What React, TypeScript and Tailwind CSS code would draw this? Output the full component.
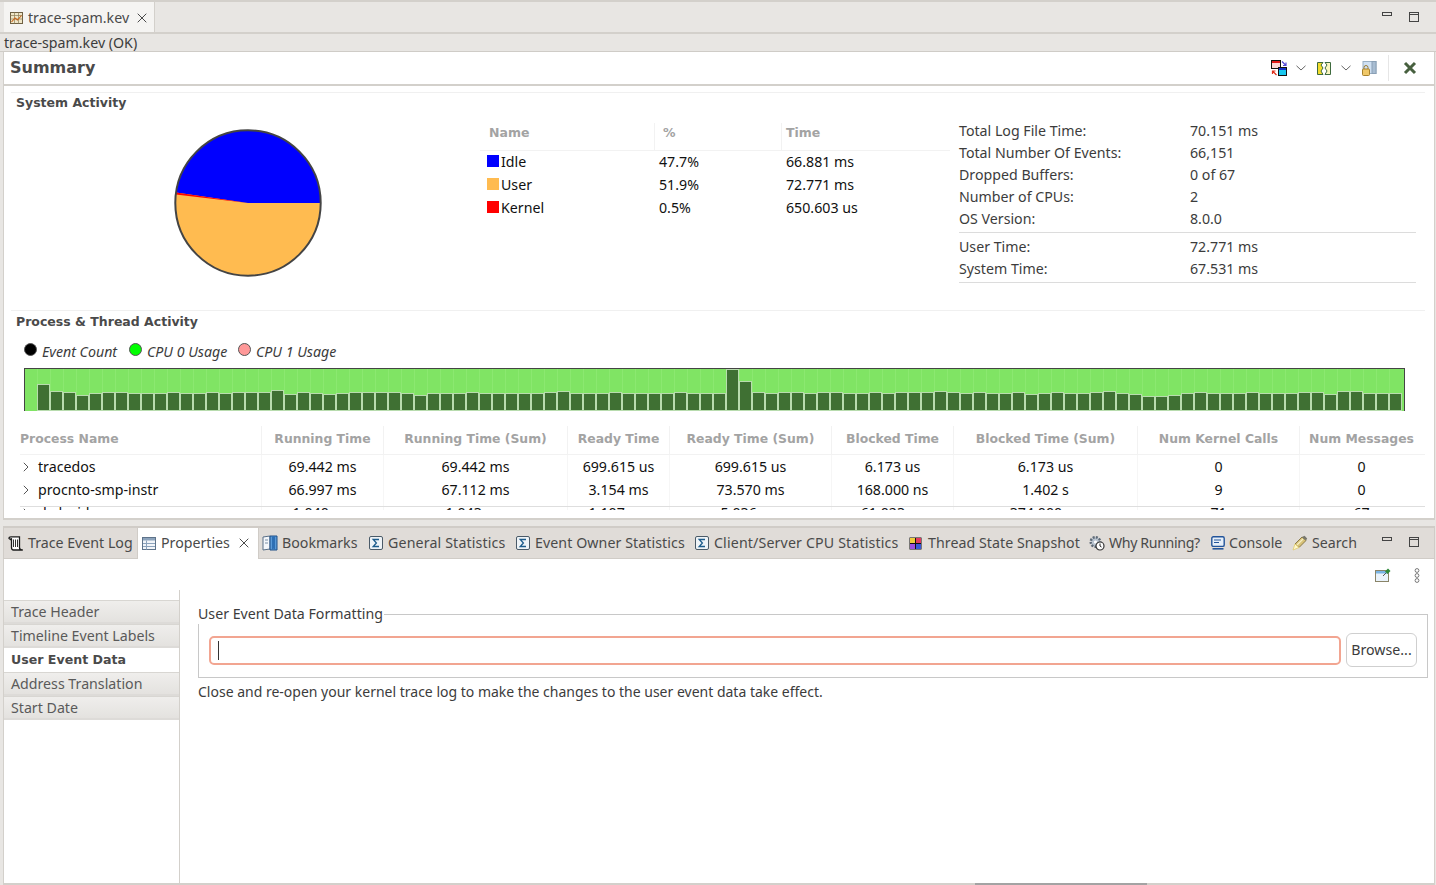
import React from "react";

const barHeights = [27,20,19,16,18,19,19,18,18,18,19,18,18,19,18,19,19,19,21,17,19,18,17,18,19,19,19,19,18,16,18,18,18,19,18,18,18,18,18,19,20,18,18,18,19,18,18,18,18,19,18,18,18,42,30,19,18,19,19,18,19,19,18,18,19,18,19,19,19,20,19,18,19,18,18,19,17,18,19,18,18,19,20,18,17,15,15,16,18,19,18,18,18,19,18,18,18,19,19,17,20,20,18,18,18];

function Sigma() {
  return (
    <svg width="14" height="14" viewBox="0 0 14 14" className="shrink-0">
      <rect x="0.5" y="0.5" width="13" height="13" rx="1.5" fill="#eef3f7" stroke="#4a5a68" />
      <path d="M10 3.5H4.2L7.4 7 4.2 10.5H10" fill="none" stroke="#1d5c8c" strokeWidth="1.3" />
    </svg>
  );
}
function CloseX({ size = 10 }: { size?: number }) {
  return (
    <svg width={size} height={size} viewBox="0 0 10 10" className="shrink-0">
      <path d="M0.7 0.7L9.3 9.3M9.3 0.7L0.7 9.3" stroke="#4a4a4a" strokeWidth="1" fill="none" />
    </svg>
  );
}
function Chevron() {
  return (
    <svg width="10" height="6" viewBox="0 0 10 6" className="shrink-0">
      <path d="M0.5 0.8L5 5L9.5 0.8" fill="none" stroke="#666" strokeWidth="1" />
    </svg>
  );
}
function KevIcon() {
  return (
    <svg width="13" height="12" viewBox="0 0 13 12" className="shrink-0">
      <rect x="0.5" y="0.5" width="12" height="11" fill="#efe6c8" stroke="#6f6144" />
      <path d="M0.5 3.5H12.5M0.5 7H12.5M4.5 0.5V11.5M8.5 0.5V11.5" stroke="#8d7c58" strokeWidth="0.7" />
      <path d="M1.5 10L5 6L7.5 8L11.5 3.5" fill="none" stroke="#c8651c" strokeWidth="1.1" />
    </svg>
  );
}
function SwapIcon() {
  return (
    <svg width="16" height="16" viewBox="0 0 16 16" className="shrink-0">
      <rect x="0.5" y="0.5" width="9" height="8" fill="#fbd5d5" stroke="#111" />
      <rect x="1" y="1" width="8" height="2" fill="#e01818" />
      <rect x="7.5" y="7.5" width="8" height="8" fill="#19c7ee" stroke="#111" />
      <rect x="8" y="8" width="7" height="2" fill="#1232c8" />
      <path d="M11 1.5L15 5.5M15 2.5V5.5H12" fill="none" stroke="#5548d8" strokeWidth="1.2" />
      <path d="M5.5 15L1.5 11M1.5 14V11H4.5" fill="none" stroke="#e0301c" strokeWidth="1.2" />
    </svg>
  );
}
function SplitIcon() {
  return (
    <svg width="14" height="13" viewBox="0 0 14 13" className="shrink-0">
      <path d="M0.5 0.5H6L4 3L6 6L4 9L6 12.5H0.5Z" fill="#f2dc2c" stroke="#3e6a3e" />
      <path d="M13.5 0.5H8L10 3L8 6L10 9L8 12.5H13.5Z" fill="#fbf6c0" stroke="#3e6a3e" />
    </svg>
  );
}
function LockIcon() {
  return (
    <svg width="15" height="15" viewBox="0 0 15 15" className="shrink-0">
      <rect x="1" y="0.5" width="13" height="12" fill="#cfe0f2" stroke="#9ab0c4" />
      <rect x="10" y="0.5" width="4" height="12" fill="#a8bdd2" stroke="#8aa0b6" />
      <rect x="0.5" y="8" width="7" height="6.5" rx="1" fill="#f0c868" stroke="#a8822c" />
      <path d="M2 8V6.5a2 2 0 0 1 4 0V8" fill="none" stroke="#9a7a30" />
    </svg>
  );
}
function LogIcon() {
  return (
    <svg width="16" height="15" viewBox="0 0 16 15" className="shrink-0">
      <path d="M1 2.5C1 1 2 0.8 3 0.8H11.5V11.5C11.5 13 12.5 14 14.8 14H5.5C4 14 3.5 13 3.5 11.5V3C3.5 2.5 3 2.5 2.5 3.5L1 2.5Z" fill="#fff" stroke="#1c1c1c" strokeWidth="1.3" />
      <path d="M5.5 3.5V11M7.5 3.5V11M9.5 3.5V11" stroke="#1c1c1c" strokeWidth="0.9" />
    </svg>
  );
}
function PropsIcon() {
  return (
    <svg width="14" height="13" viewBox="0 0 14 13" className="shrink-0">
      <rect x="0.5" y="0.5" width="13" height="12" fill="#f2f5f9" stroke="#5e738a" />
      <rect x="1" y="1" width="12" height="2.5" fill="#8ca3bc" />
      <path d="M4.5 3.5V12.5M1 6.5H13M1 9.5H13" stroke="#8ca3bc" />
    </svg>
  );
}
function BookIcon() {
  return (
    <svg width="16" height="16" viewBox="0 0 16 16" className="shrink-0">
      <path d="M1 2L8 1V14L1 15Z" fill="#f4f7fb" stroke="#5a7088" />
      <path d="M8 1H15V15H8Z" fill="#5a9ad8" stroke="#1f4f86" />
      <path d="M10 1V15L11.5 13.5L13 15V1Z" fill="#2e6fb4" />
      <path d="M3 5H6M3 8H6" stroke="#7a8fa6" />
    </svg>
  );
}
function ThreadIcon() {
  return (
    <svg width="13" height="13" viewBox="0 0 13 13" className="shrink-0">
      <rect x="0.5" y="0.5" width="12" height="12" fill="#111" />
      <rect x="1" y="1" width="5" height="5" fill="#f0cc3c" />
      <rect x="7" y="1" width="5" height="5" fill="#e23a5e" />
      <rect x="1" y="7" width="5" height="5" fill="#9c4fe0" />
      <rect x="7" y="7" width="5" height="5" fill="#3a58d8" />
    </svg>
  );
}
function GearIcon() {
  return (
    <svg width="16" height="16" viewBox="0 0 16 16" className="shrink-0">
      <circle cx="6.5" cy="7" r="4.8" fill="#b9c4d0" stroke="#5f6b78" strokeWidth="2.4" strokeDasharray="2 1.2" />
      <circle cx="6.5" cy="7" r="1.6" fill="#fff" />
      <circle cx="11" cy="11" r="4" fill="#fff" stroke="#333" strokeWidth="1.2" />
      <path d="M11 8.5V11L12.5 12" fill="none" stroke="#222" />
    </svg>
  );
}
function ConsoleIcon() {
  return (
    <svg width="14" height="14" viewBox="0 0 14 14" className="shrink-0">
      <rect x="0.8" y="0.8" width="12.4" height="9.6" rx="1.5" fill="#e6eff9" stroke="#22549a" strokeWidth="1.4" />
      <path d="M3 4H10M3 6.5H8" stroke="#22549a" />
      <path d="M1.5 12.8H12.5" stroke="#22549a" strokeWidth="1.6" />
    </svg>
  );
}
function SearchIcon() {
  return (
    <svg width="16" height="16" viewBox="0 0 16 16" className="shrink-0">
      <path d="M3 9L10 2L14 5.5L7 12.5Z" fill="#d8c278" stroke="#8a7a48" />
      <path d="M1 15L3 9L7 12.5Z" fill="#fff8cc" stroke="#e0c860" strokeWidth="0.7" />
      <path d="M10 2L14 5.5L15.2 3.5L12.5 0.8Z" fill="#77776e" />
      <path d="M5 10L11 4" stroke="#f6eec4" strokeWidth="1.2" />
    </svg>
  );
}
function PinIcon() {
  return (
    <svg width="16" height="14" viewBox="0 0 16 14" className="shrink-0">
      <rect x="0.5" y="2.5" width="13" height="11" fill="#eaf3fb" stroke="#8a8468" />
      <rect x="1" y="3" width="12" height="2.5" fill="#79b4e4" />
      <path d="M8 8L11 5" stroke="#555" />
      <path d="M10 3.5L13 0.5L15.5 3L12.5 6Z" fill="#2e8a38" />
    </svg>
  );
}
function MenuDots() {
  return (
    <svg width="6" height="15" viewBox="0 0 6 15" className="shrink-0">
      <circle cx="3" cy="2.5" r="1.9" fill="#fff" stroke="#777" />
      <circle cx="3" cy="7.5" r="1.9" fill="#fff" stroke="#777" />
      <circle cx="3" cy="12.5" r="1.9" fill="#fff" stroke="#777" />
    </svg>
  );
}
function Expander() {
  return (
    <svg width="6" height="10" viewBox="0 0 6 10" className="shrink-0">
      <path d="M0.8 0.8L5 5L0.8 9.2" fill="none" stroke="#555" />
    </svg>
  );
}
function MinIcon() {
  return (
    <svg width="10" height="5" viewBox="0 0 10 5" className="mb-[5px] shrink-0">
      <rect x="0.5" y="0.5" width="9" height="3" fill="none" stroke="#444" />
    </svg>
  );
}
function MaxIcon() {
  return (
    <svg width="10" height="10" viewBox="0 0 10 10" className="ml-[17px] shrink-0">
      <rect x="0.5" y="0.5" width="9" height="9" fill="none" stroke="#444" />
      <path d="M0.5 2.5H9.5" stroke="#444" />
    </svg>
  );
}

const info1 = [
  ["Total Log File Time:", "70.151 ms"],
  ["Total Number Of Events:", "66,151"],
  ["Dropped Buffers:", "0 of 67"],
  ["Number of CPUs:", "2"],
  ["OS Version:", "8.0.0"],
];
const info2 = [
  ["User Time:", "72.771 ms"],
  ["System Time:", "67.531 ms"],
];
const legendRows = [
  ["Idle", "bg-[#0000ff]", "47.7%", "66.881 ms"],
  ["User", "bg-[#ffbb50]", "51.9%", "72.771 ms"],
  ["Kernel", "bg-[#ff0000]", "0.5%", "650.603 us"],
];
const gridCols = "grid grid-cols-[241px_122px_184px_102px_162px_122px_184px_162px_124px]";
const procHeaders = ["Running Time", "Running Time (Sum)", "Ready Time", "Ready Time (Sum)", "Blocked Time", "Blocked Time (Sum)", "Num Kernel Calls", "Num Messages"];
const procRows = [
  ["tracedos", "69.442 ms", "69.442 ms", "699.615 us", "699.615 us", "6.173 us", "6.173 us", "0", "0"],
  ["procnto-smp-instr", "66.997 ms", "67.112 ms", "3.154 ms", "73.570 ms", "168.000 ns", "1.402 s", "9", "0"],
  ["dsdevid", "1.040 ms", "1.043 ms", "1.107 ms", "5.036 ms", "61.023 us", "374.000 us", "71", "67"],
];
const tabs = [
  { label: "Bookmarks", icon: <BookIcon />, cls: "w-[106px] pl-[3px] gap-[4px]" },
  { label: "General Statistics", icon: <Sigma />, cls: "w-[147px] pl-[4px] gap-[5px] tracking-[0.15px]" },
  { label: "Event Owner Statistics", icon: <Sigma />, cls: "w-[179px] pl-[4px] gap-[5px] tracking-[0.08px]" },
  { label: "Client/Server CPU Statistics", icon: <Sigma />, cls: "w-[214px] pl-[4px] gap-[5px] tracking-[0.15px]" },
  { label: "Thread State Snapshot", icon: <ThreadIcon />, cls: "w-[180px] pl-[4px] gap-[6px] tracking-[0.05px]" },
  { label: "Why Running?", icon: <GearIcon />, cls: "w-[121px] pl-[4px] gap-[4px] tracking-[-0.38px]" },
  { label: "Console", icon: <ConsoleIcon />, cls: "w-[82px] pl-[5px] gap-[4px]" },
  { label: "Search", icon: <SearchIcon />, cls: "w-[80px] pl-[4px] gap-[4px]" },
];
const sideTabs = ["Trace Header", "Timeline Event Labels", "User Event Data", "Address Translation", "Start Date"];

export default function App() {
  return (
    <div className="w-[1436px] h-[885px] overflow-hidden flex flex-col bg-[#e8e6e3] font-['Noto_Sans',sans-serif] text-[14.2px] text-[#3c3c3c]">
      {/* Editor tab strip */}
      <div className="h-[34px] shrink-0 border-t-2 border-b-2 border-[#d3d0cb] flex items-start">
        <div className="ml-[4px] w-[151px] h-[30px] bg-[#f5f4f2] border-r border-[#d3d0cb] flex items-center pl-[6px] pt-[1px] shrink-0">
          <KevIcon />
          <span className="ml-[5px] text-[#4a4a4a]">trace-spam.kev</span>
          <span className="ml-[8px]"><CloseX /></span>
        </div>
        <div className="h-[30px] flex items-center ml-[1227px]">
          <MinIcon />
          <MaxIcon />
        </div>
      </div>
      {/* status */}
      <div className="h-[18px] shrink-0 pl-[4px] leading-[18px] border-b border-[#cfccc7] text-[#3c3c3c]">trace-spam.kev (OK)</div>
      {/* Pane */}
      <div className="h-[468px] shrink-0 ml-[3px] mr-[1px] flex flex-col bg-white border-l border-r border-b-2 border-[#d3d0cb]">
        <div className="h-[34px] shrink-0 flex items-center border-b-2 border-[#d3d0cb] pl-[6px]">
          <span className="font-['DejaVu_Sans',sans-serif] font-bold text-[16px] text-[#4a4a4a] w-[1261px]">Summary</span>
          <SwapIcon />
          <span className="ml-[9px]"><Chevron /></span>
          <span className="ml-[11px]"><SplitIcon /></span>
          <span className="ml-[10px]"><Chevron /></span>
          <span className="ml-[11px]"><LockIcon /></span>
          <div className="ml-[11px] w-px h-[26px] bg-[#e6e6e6]" />
          <svg width="14" height="14" viewBox="0 0 14 14" className="ml-[14px] shrink-0">
            <path d="M2 2L12 12M12 2L2 12" stroke="#47603f" strokeWidth="3" fill="none" />
          </svg>
        </div>
        {/* Sections */}
        <div className="flex-1 min-h-0 flex flex-col pl-[12px] pr-[9px]">
          <div className="h-[218px] shrink-0 mt-[6px] border-t border-[#f0f0f0] -ml-[5px] pl-[5px] flex flex-col">
            <div className="h-[20px] leading-[20px] font-['DejaVu_Sans',sans-serif] font-bold text-[12.5px] text-[#4a4a4a]">System Activity</div>
            <div className="flex flex-1 min-h-0">
              <div className="w-[464px] shrink-0 flex justify-center pt-[15px]">
                <svg width="150" height="150" viewBox="0 0 150 150" className="shrink-0">
                  <circle cx="75" cy="75" r="72.7" fill="#ffbb50" />
                  <path d="M75 75L147.7 75A72.7 72.7 0 0 0 3.05 64.5Z" fill="#0000ff" />
                  <path d="M75 75L3.05 64.5L2.85 66.5Z" fill="#ff0000" />
                  <circle cx="75" cy="75" r="72.7" fill="none" stroke="#444" strokeWidth="2" />
                </svg>
              </div>
              <div className="w-[470px] shrink-0 pt-[10px]">
                <div className="grid grid-cols-[174px_127px_169px] h-[28px] border-b border-[#f2f2f2] font-['DejaVu_Sans',sans-serif] font-bold text-[12.5px] text-[#a3a3a3]">
                  <div className="pl-[9px] leading-[20px]">Name</div>
                  <div className="pl-[8px] leading-[20px] border-l border-[#f2f2f2]">%</div>
                  <div className="pl-[4px] leading-[20px] border-l border-[#f2f2f2]">Time</div>
                </div>
                <div className="-mt-px">
                  {legendRows.map((r) => (
                    <div key={r[0]} className="grid grid-cols-[174px_127px_169px] h-[23px] items-center text-[#111]">
                      <div className="flex items-center pl-[7px]">
                        <span className={"w-[12px] h-[12px] mr-[2px] " + r[1]} />
                        {r[0]}
                      </div>
                      <div className="pl-[5px]">{r[2]}</div>
                      <div className="pl-[5px]">{r[3]}</div>
                    </div>
                  ))}
                </div>
              </div>
              <div className="w-[457px] shrink-0 ml-[9px] pt-[7px]">
                {info1.map((r) => (
                  <div key={r[0]} className="flex h-[22px] items-center">
                    <span className="w-[231px]">{r[0]}</span>
                    <span>{r[1]}</span>
                  </div>
                ))}
                <div className="mt-[2px] mb-[3px] border-t border-[#dcdcdc]" />
                {info2.map((r) => (
                  <div key={r[0]} className="flex h-[22px] items-center">
                    <span className="w-[231px]">{r[0]}</span>
                    <span>{r[1]}</span>
                  </div>
                ))}
                <div className="mt-[2px] border-t border-[#dcdcdc]" />
              </div>
            </div>
          </div>
          <div className="h-[201px] shrink-0 border-t border-[#f0f0f0] -ml-[5px] pl-[5px] flex flex-col overflow-hidden">
            <div className="h-[21px] shrink-0 leading-[21px] font-['DejaVu_Sans',sans-serif] font-bold text-[12.5px] text-[#4a4a4a]">Process &amp; Thread Activity</div>
            <div className="h-[20px] shrink-0 mt-[10px] flex items-center pl-[8px] italic text-[#3c3c3c]">
              <span className="w-[13px] h-[13px] rounded-full bg-black border border-[#555] -mt-[6px] mr-[5px]" />
              <span className="w-[87px]">Event Count</span>
              <span className="w-[13px] h-[13px] rounded-full bg-[#00ff00] border border-[#555] -mt-[6px] mr-[5px]" />
              <span className="w-[91px]">CPU 0 Usage</span>
              <span className="w-[13px] h-[13px] rounded-full bg-[#ff9999] border border-[#555] -mt-[6px] mr-[5px]" />
              <span>CPU 1 Usage</span>
            </div>
            <div className="h-[43px] mt-[6px] ml-[8px] w-[1381px] shrink-0 border-t border-l border-r border-[#444] bg-[#80e464] flex">
              <div className="w-[12px] shrink-0 h-full" />
              {barHeights.map((h, i) => (
                <div key={i} className="w-[13px] shrink-0 h-full flex items-end border-l border-[#8be870]">
                  <div style={{ height: h }} className="w-[13px] shrink-0 -ml-px bg-[#3f7033] border border-[#b8dcae]" />
                </div>
              ))}
            </div>
            <div className={gridCols + " mt-[15px] h-[29px] shrink-0 ml-[4px] border-b border-[#f2f2f2] font-['DejaVu_Sans',sans-serif] font-bold text-[12.4px] text-[#a3a3a3]"}>
              <div className="leading-[26px]">Process Name</div>
              {procHeaders.map((h) => (
                <div key={h} className="text-center leading-[26px] border-l border-[#f2f2f2] whitespace-nowrap">{h}</div>
              ))}
            </div>
            <div className="ml-[4px] h-[55px] shrink-0 overflow-hidden relative">
              {procRows.map((r) => (
                <div key={r[0]} className={gridCols + " h-[23px] items-center text-[#111]"}>
                  <div className="flex items-center pl-[3px] gap-[9px] h-full">
                    <Expander />
                    <span>{r[0]}</span>
                  </div>
                  {r.slice(1).map((c, j) => (
                    <div key={j} className="text-center h-full leading-[23px] border-l border-[#f6f6f6]">{c}</div>
                  ))}
                </div>
              ))}
              <div className="absolute left-0 right-0 bottom-[3px] h-px bg-[#dedede]" />
            </div>
          </div>
        </div>
      </div>
      {/* Lower tab bar */}
      <div className="mt-[6px] h-[33px] shrink-0 ml-[3px] mr-[1px] bg-[#e0dcd8] border-t-2 border-b border-[#d0ccc7] border-l border-r flex items-center whitespace-nowrap text-[#4a4a4a]">
        <div className="w-[133px] h-full flex items-center pl-[4px] gap-[4px]"><LogIcon />Trace Event Log</div>
        <div className="w-[122px] h-[32px] -mb-px self-start bg-white border-l border-r border-[#d0ccc7] flex items-center pl-[4px] pb-[2px]">
          <PropsIcon />
          <span className="ml-[5px] mr-[6px] w-[72px]">Properties</span>
          <CloseX />
        </div>
        {tabs.map((t) => (
          <div key={t.label} className={"h-full flex items-center shrink-0 " + t.cls}>
            {t.icon}
            {t.label}
          </div>
        ))}
        <span className="ml-[14px] flex items-center pb-[2px]">
          <MinIcon />
          <MaxIcon />
        </span>
      </div>
      {/* Lower pane */}
      <div className="flex-1 min-h-0 ml-[3px] mr-[1px] bg-white border-l border-r border-b-2 border-[#d3d0cb] flex flex-col relative">
        <div className="h-[31px] shrink-0 flex items-center justify-end pr-[14px] pt-[1px]">
          <PinIcon />
          <span className="ml-[23px]"><MenuDots /></span>
        </div>
        <div className="flex flex-1 min-h-0">
          <div className="w-[176px] shrink-0 border-r border-[#d3d0cb] pt-[10px] flex flex-col">
            {sideTabs.map((s) => {
              const sel = s === "User Event Data";
              return sel ? (
                <div key={s} className="h-[24px] leading-[23px] pl-[7px] font-['DejaVu_Sans',sans-serif] font-bold text-[12.6px] text-[#4a4a4a] bg-white">{s}</div>
              ) : (
                <div key={s} className="h-[24px] leading-[22px] pl-[7px] bg-gradient-to-b from-[#efeeec] to-[#e4e2df] border-t border-[#d8d6d2] border-b-2 border-b-[#dddbd8] text-[#5a5a5a]">{s}</div>
              );
            })}
          </div>
          <div className="flex-1 min-w-0 pl-[18px] pr-[6px] pt-[14px]">
            <fieldset className="border border-[#c8c8c8] h-[74px] m-0 p-0 pl-[10px] pr-[10px]">
              <legend className="p-0 m-0 -ml-[11px] pr-[1px] leading-[20px]">User Event Data Formatting</legend>
              <div className="flex items-center mt-[9px]">
                <div className="w-[1132px] h-[29px] rounded-[5px] border-2 border-[#f2a591] bg-white flex items-center pl-[7px]">
                  <div className="w-px h-[19px] bg-[#333]" />
                </div>
                <div className="ml-[5px] w-[71px] h-[34px] rounded-[6px] border border-[#cfcfcf] bg-white flex items-center justify-center">Browse...</div>
              </div>
            </fieldset>
            <div className="mt-[4px] leading-[20px] text-[14px]">Close and re-open your kernel trace log to make the changes to the user event data take effect.</div>
          </div>
        </div>
        <div className="absolute left-[971px] bottom-[-2px] w-[172px] h-[2px] bg-[#a3a3a3]" />
      </div>
    </div>
  );
}
